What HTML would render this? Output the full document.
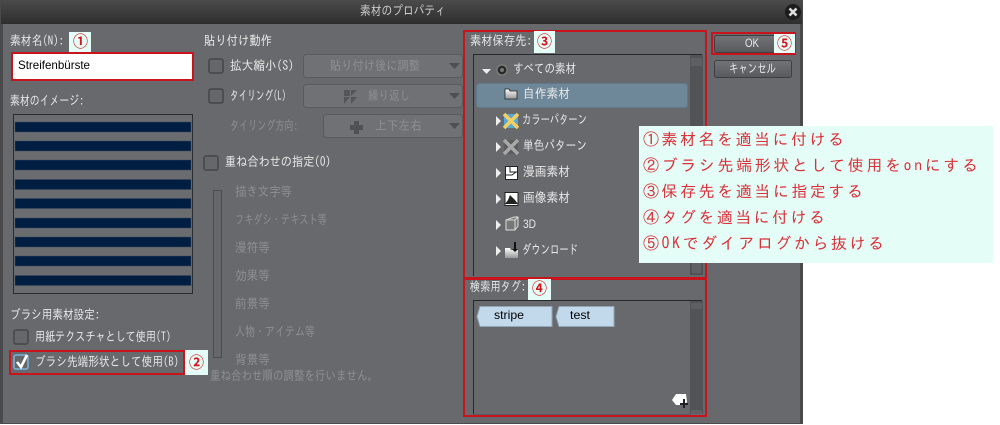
<!DOCTYPE html>
<html lang="ja"><head><meta charset="utf-8"><title>素材のプロパティ</title>
<style>
html,body{margin:0;padding:0;background:#fff;width:1000px;height:425px;overflow:hidden}
svg{display:block}
text{font-family:"Liberation Sans","IPAGothic","Noto Sans CJK JP",sans-serif;font-size:12px;fill:#e8e8e8}
.j{font-family:"IPAGothic","Noto Sans CJK JP",sans-serif;font-size:13px}
.d{fill:#8e8f92}
.r{font-family:"IPAGothic","Noto Sans CJK JP",sans-serif;font-size:16px;fill:#d9303a}
.n{font-size:16px;font-weight:bold;fill:#d4141e;font-family:"Noto Sans CJK JP",sans-serif}
.cb{fill:#66676b;stroke:#45464a;stroke-width:1.5}
.dd{fill:#707175;stroke:#5a5b5f}
</style></head><body>
<svg width="1000" height="425" viewBox="0 0 1000 425" xmlns="http://www.w3.org/2000/svg">
<defs>
<linearGradient id="t" x1="0" y1="0" x2="0" y2="1"><stop offset="0" stop-color="#4a4a4a"/><stop offset="1" stop-color="#2e2e2e"/></linearGradient>
<linearGradient id="b" x1="0" y1="0" x2="0" y2="1"><stop offset="0" stop-color="#737478"/><stop offset="1" stop-color="#58595c"/></linearGradient>
<linearGradient id="f" x1="0" y1="0" x2="0" y2="1"><stop offset="0" stop-color="#fff"/><stop offset="1" stop-color="#999"/></linearGradient>
</defs>
<rect width="1000" height="425" fill="#fff"/>
<rect x="0" y="0" width="803" height="424" fill="#4a4a4c"/>
<rect x="1" y="1" width="801" height="23" fill="url(#t)"/>
<rect x="3" y="24" width="797" height="399" fill="#68696d"/>
<text class="j" x="360" y="15" textLength="86" lengthAdjust="spacingAndGlyphs" style="fill:#ccc">素材のプロパティ</text>
<circle cx="793" cy="12" r="8" fill="#1c1c1c"/>
<path d="M789.5 8.500l7 7M796.500 8.500l-7 7" stroke="#ddd" stroke-width="2.600"/>

<!-- left -->
<text class="j" x="10" y="45" textLength="54" lengthAdjust="spacingAndGlyphs">素材名(N):</text>
<rect x="13" y="54" width="179" height="25" fill="#fff"/>
<text x="18" y="69" textLength="72" lengthAdjust="spacingAndGlyphs" style="fill:#000">Streifenbürste</text>
<text class="j" x="10" y="105" textLength="74" lengthAdjust="spacingAndGlyphs">素材のイメージ:</text>
<rect x="13.500" y="114.500" width="179" height="179" fill="#6b6c70" stroke="#2b2c2f"/>
<g fill="#001d42" stroke="#3c4a5e" stroke-width=".5">
<rect x="15" y="122" width="176" height="10"/><rect x="15" y="141" width="176" height="10"/><rect x="15" y="160" width="176" height="10"/><rect x="15" y="179.500" width="176" height="10"/><rect x="15" y="198.500" width="176" height="10"/><rect x="15" y="218" width="176" height="10"/><rect x="15" y="237" width="176" height="10"/><rect x="15" y="256" width="176" height="10"/><rect x="15" y="275.500" width="176" height="10"/>
</g>
<text class="j" x="10" y="319" textLength="90" lengthAdjust="spacingAndGlyphs">ブラシ用素材設定:</text>
<rect class="cb" x="14" y="330" width="14" height="14" rx="2"/>
<text class="j" x="35" y="341" textLength="136" lengthAdjust="spacingAndGlyphs">用紙テクスチャとして使用(T)</text>
<rect x="14" y="355" width="14" height="14" rx="2" fill="#66676b" stroke="#7cb4dc" stroke-width="1.500"/>
<path d="M17 362l4 5 6-12" fill="none" stroke="#fff" stroke-width="2.600"/>
<text class="j" x="35" y="366" textLength="144" lengthAdjust="spacingAndGlyphs">ブラシ先端形状として使用(B)</text>

<!-- middle -->
<text class="j" x="204" y="45" textLength="68" lengthAdjust="spacingAndGlyphs">貼り付け動作</text>
<rect class="cb" x="209" y="59" width="14" height="14" rx="2"/>
<text class="j" x="230" y="70" textLength="64" lengthAdjust="spacingAndGlyphs">拡大縮小(S)</text>
<rect class="dd" x="303.500" y="54.500" width="159" height="23" rx="3"/>
<text class="j d" x="330" y="70" textLength="90" lengthAdjust="spacingAndGlyphs">貼り付け後に調整</text>
<path d="M449 63h11l-5.500 6z" fill="#4e4f52"/>
<rect class="cb" x="209" y="89" width="14" height="14" rx="2"/>
<text class="j" x="230" y="100" textLength="56" lengthAdjust="spacingAndGlyphs">タイリング(L)</text>
<rect class="dd" x="303.500" y="84.500" width="159" height="23" rx="3"/>
<path d="M344 90h6v6h-6zM351 90h6l-6 6zM344 97h6l-6 7zM351 97h6l-6 7z" fill="#545559"/>
<text class="j d" x="368" y="100" textLength="42" lengthAdjust="spacingAndGlyphs">繰り返し</text>
<path d="M449 93h11l-5.500 6z" fill="#4e4f52"/>
<text class="j d" x="230" y="130" textLength="68" lengthAdjust="spacingAndGlyphs">タイリング方向:</text>
<rect class="dd" x="323.500" y="114.500" width="139" height="23" rx="3"/>
<path d="M354 121h5v4h4v5h-4v4h-5v-4h-4v-5h4z" fill="#505155"/>
<text class="j d" x="375" y="130" textLength="47" lengthAdjust="spacingAndGlyphs">上下左右</text>
<path d="M449 123h11l-5.500 6z" fill="#4e4f52"/>
<rect class="cb" x="204" y="156" width="14" height="14" rx="2"/>
<text class="j" x="225" y="166" textLength="106" lengthAdjust="spacingAndGlyphs">重ね合わせの指定(O)</text>
<rect x="213.500" y="190.500" width="8" height="167" fill="#66676b" stroke="#4b4c50"/>
<text class="j d" x="235" y="196" textLength="57" lengthAdjust="spacingAndGlyphs">描き文字等</text>
<text class="j d" x="235" y="224" textLength="92" lengthAdjust="spacingAndGlyphs">フキダシ・テキスト等</text>
<text class="j d" x="235" y="252" textLength="35" lengthAdjust="spacingAndGlyphs">漫符等</text>
<text class="j d" x="235" y="280" textLength="35" lengthAdjust="spacingAndGlyphs">効果等</text>
<text class="j d" x="235" y="308" textLength="35" lengthAdjust="spacingAndGlyphs">前景等</text>
<text class="j d" x="235" y="336" textLength="80" lengthAdjust="spacingAndGlyphs">人物・アイテム等</text>
<text class="j d" x="235" y="364" textLength="35" lengthAdjust="spacingAndGlyphs">背景等</text>
<text class="j d" x="210" y="380" textLength="168" lengthAdjust="spacingAndGlyphs">重ね合わせ順の調整を行いません。</text>

<!-- tree -->
<text class="j" x="470" y="45" textLength="62" lengthAdjust="spacingAndGlyphs">素材保存先:</text>
<path d="M473.500 276V54.500H702" fill="none" stroke="#27282b"/>
<rect x="690" y="55" width="13" height="220" fill="#525357"/>
<rect x="691" y="58" width="11" height="8" fill="#5e5f63"/>
<rect x="691" y="262" width="11" height="12" fill="#606165" stroke="#4a4b4e"/>
<path d="M482 69h9l-4.500 5z" fill="#eee"/>
<circle cx="502" cy="70" r="5" fill="#2a2a2a" stroke="#888"/>
<circle cx="502" cy="70" r="2" fill="#777"/>
<text class="j" x="513" y="73" textLength="63" lengthAdjust="spacingAndGlyphs">すべての素材</text>
<rect x="476.500" y="83.500" width="211" height="24" rx="3" fill="#6f8899" stroke="#62798a"/>
<path d="M505 89h4l1 2h7v8h-12z" fill="url(#f)" stroke="#222" stroke-width=".8"/>
<text class="j" x="523" y="98" textLength="47" lengthAdjust="spacingAndGlyphs">自作素材</text>

<path d="M496 116l5 5-5 5z" fill="#eee"/>
<rect x="504" y="114" width="14" height="14" fill="#56a8d8"/>
<path d="M504 114l14 14M518 114l-14 14" stroke="#f4d060" stroke-width="3.500"/>
<text class="j" x="522" y="124" textLength="65" lengthAdjust="spacingAndGlyphs">カラーパターン</text>
<path d="M496 142l5 5-5 5z" fill="#eee"/>
<rect x="504" y="140" width="14" height="14" fill="#5c5c5c"/>
<path d="M504 140l14 14M518 140l-14 14" stroke="#a8a8a8" stroke-width="3.500"/>
<text class="j" x="523" y="150" textLength="64" lengthAdjust="spacingAndGlyphs">単色パターン</text>
<path d="M496 168l5 5-5 5z" fill="#eee"/>
<rect x="505.500" y="166.500" width="12" height="13" fill="#fff" stroke="#222"/>
<path d="M510 166v6h8M505 175h7l4-3" fill="none" stroke="#222"/>
<text class="j" x="523" y="176" textLength="47" lengthAdjust="spacingAndGlyphs">漫画素材</text>
<path d="M496 194l5 5-5 5z" fill="#eee"/>
<rect x="505" y="192.500" width="13" height="13" fill="#fff" stroke="#222"/>
<path d="M505 204l3-4 2-5 3 3 2 2 3 4z" fill="#222"/>
<text class="j" x="523" y="202" textLength="47" lengthAdjust="spacingAndGlyphs">画像素材</text>
<path d="M496 220l5 5-5 5z" fill="#eee"/>
<path d="M506 220l8-3h4v9l-3 4h-9zM506 220h9v10M515 220l3-3" fill="#777" stroke="#ddd"/>
<text x="523" y="228" textLength="13" lengthAdjust="spacingAndGlyphs">3D</text>
<path d="M496 246l5 5-5 5z" fill="#eee"/>
<path d="M505 248h5l1 2h7v8h-13z" fill="url(#f)"/>
<path d="M514 242v7h-2l3 3 3-3h-2v-7z" fill="#111"/>
<text class="j" x="522" y="254" textLength="56" lengthAdjust="spacingAndGlyphs">ダウンロード</text>

<!-- tags -->
<text class="j" x="470" y="291" textLength="56" lengthAdjust="spacingAndGlyphs">検索用タグ:</text>
<path d="M473.500 414V300.500H702" fill="none" stroke="#27282b"/>
<path d="M473 414.500h217" stroke="#58595c"/>
<rect x="690" y="301" width="13" height="113" fill="#525357"/>
<rect x="691" y="303" width="11" height="6" fill="#5e5f63"/>
<rect x="691" y="410" width="11" height="4" fill="#606165"/>
<path d="M480 306.500h72v20h-72l-3-10z" fill="#c2d9ec" stroke="#93a6b6"/>
<text x="494" y="319" textLength="30" lengthAdjust="spacingAndGlyphs" style="fill:#000">stripe</text>
<path d="M559 306.500h55v20h-55l-3-10z" fill="#c2d9ec" stroke="#93a6b6"/>
<text x="570" y="319" textLength="20" lengthAdjust="spacingAndGlyphs" style="fill:#000">test</text>
<path d="M676 394h10l1 8-2 3h-9l-4-5z" fill="#fff"/>
<path d="M684 399v9M680 404h8" stroke="#222" stroke-width="2"/>

<!-- buttons -->
<rect x="714.500" y="35.500" width="76" height="17" rx="2" fill="url(#b)" stroke="#3e3f42"/>
<text x="745" y="47" textLength="14" lengthAdjust="spacingAndGlyphs">OK</text>
<rect x="714.500" y="60.500" width="77" height="17" rx="2" fill="url(#b)" stroke="#3e3f42"/>
<text class="j" x="729" y="73" textLength="47" lengthAdjust="spacingAndGlyphs">キャンセル</text>

<!-- red boxes -->
<g fill="none" stroke="#c9141e" stroke-width="2">
<rect x="12" y="53" width="181" height="27"/>
<rect x="10" y="351" width="174" height="23"/>
<rect x="464" y="31" width="242" height="247"/>
<rect x="464" y="279" width="242" height="137"/>
<rect x="712" y="33" width="83" height="21"/>
</g>

<!-- callouts -->
<g fill="#e4fdf7">
<rect x="69" y="32" width="22" height="20"/>
<rect x="185" y="350" width="23" height="25"/>
<rect x="534" y="31" width="21" height="22"/>
<rect x="528" y="279" width="23" height="21"/>
<rect x="774" y="34" width="21" height="19"/>
<rect x="639" y="126" width="354" height="137"/>
</g>
<text class="n" x="73" y="47" textLength="15" lengthAdjust="spacingAndGlyphs">①</text>
<text class="n" x="189" y="368" textLength="15" lengthAdjust="spacingAndGlyphs">②</text>
<text class="n" x="537" y="47" textLength="15" lengthAdjust="spacingAndGlyphs">③</text>
<text class="n" x="532" y="294" textLength="15" lengthAdjust="spacingAndGlyphs">④</text>
<text class="n" x="777" y="49" textLength="15" lengthAdjust="spacingAndGlyphs">⑤</text>
<text class="r" x="643" y="145" textLength="201" lengthAdjust="spacing">①素材名を適当に付ける</text>
<text class="r" x="643" y="171" textLength="335" lengthAdjust="spacing">②ブラシ先端形状として使用をonにする</text>
<text class="r" x="643" y="197" textLength="220" lengthAdjust="spacing">③保存先を適当に指定する</text>
<text class="r" x="643" y="223" textLength="182" lengthAdjust="spacing">④タグを適当に付ける</text>
<text class="r" x="643" y="249" textLength="241" lengthAdjust="spacing">⑤OKでダイアログから抜ける</text>
</svg>
</body></html>
